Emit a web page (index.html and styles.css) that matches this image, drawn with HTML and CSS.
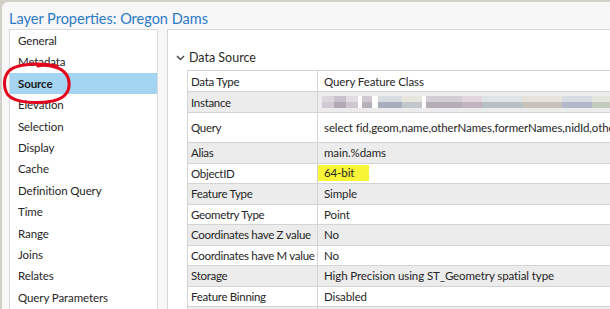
FILE: index.html
```html
<!DOCTYPE html>
<html lang="en">
<head>
    <meta charset="UTF-8">
    <meta name="viewport" content="width=device-width, initial-scale=1.0">
    <title>Layer Properties</title>
    <link rel="stylesheet" href="styles.css">
</head>
<body>
    <div class="dialog">
        <div class="title">Layer Properties: Oregon Dams</div>
        <div class="content">
            <div class="side-list">
                <div class="side-item">General</div>
                <div class="side-item">Metadata</div>
                <div class="side-item selected">Source</div>
                <div class="side-item">Elevation</div>
                <div class="side-item">Selection</div>
                <div class="side-item">Display</div>
                <div class="side-item">Cache</div>
                <div class="side-item">Definition Query</div>
                <div class="side-item">Time</div>
                <div class="side-item">Range</div>
                <div class="side-item">Joins</div>
                <div class="side-item">Relates</div>
                <div class="side-item">Query Parameters</div>
                <svg class="red-ring" width="80" height="44" viewBox="0 0 80 44">
                    <path d="M56 4 C40 1 18 1 9 8 C2 14 2 26 7 33 C14 41 36 42 52 39 C64 36 69 30 68 20 C67 11 60 6 50 4 C44 3 40 3 37 4"
                          fill="none" stroke="#e2061c" stroke-width="3" stroke-linecap="round"/>
                </svg>
            </div>
            <div class="main-panel">
                <div class="section-head">
                    <svg class="chevron" width="9" height="6" viewBox="0 0 9 6">
                        <path d="M1 1 L4.5 4.5 L8 1" fill="none" stroke="#444" stroke-width="1.4"/>
                    </svg>
                    <span>Data Source</span>
                </div>
                <table class="props">
                    <tr class="row-21"><td class="key">Data Type</td><td>Query Feature Class</td></tr>
                    <tr class="row-21 alt"><td class="key">Instance</td><td><div class="blurred"></div></td></tr>
                    <tr class="row-tall"><td class="key">Query</td><td>select fid,geom,name,otherNames,formerNames,nidId,otherStructureId,stateFedId</td></tr>
                    <tr class="alt"><td class="key">Alias</td><td>main.%dams</td></tr>
                    <tr><td class="key">ObjectID</td><td><span class="marker">64-bit</span></td></tr>
                    <tr class="alt"><td class="key">Feature Type</td><td>Simple</td></tr>
                    <tr><td class="key">Geometry Type</td><td>Point</td></tr>
                    <tr class="alt"><td class="key">Coordinates have Z value</td><td>No</td></tr>
                    <tr><td class="key">Coordinates have M value</td><td>No</td></tr>
                    <tr class="alt"><td class="key">Storage</td><td>High Precision using ST_Geometry spatial type</td></tr>
                    <tr><td class="key">Feature Binning</td><td>Disabled</td></tr>
                    <tr class="alt"><td class="key">&nbsp;</td><td>&nbsp;</td></tr>
                </table>
            </div>
        </div>
    </div>
</body>
</html>
```

FILE: styles.css
```css
body, html {
    margin: 0;
    padding: 0;
    height: 100%;
    overflow: hidden;
}
body {
    background: #d3cfca;
    font-family: 'Lato', 'Noto Sans', sans-serif;
    color: #262626;
}
.dialog {
    margin: 2px 0 0 2px;
    height: 100%;
    background: #f7f7f7;
    border-radius: 6px 0 0 0;
    display: flex;
    flex-direction: column;
}
.title {
    height: 27px;
    padding-left: 7px;
    font-size: 14.5px;
    line-height: 34px;
    color: #2b7ac6;
}
.content {
    display: flex;
    gap: 9px;
    padding-left: 7px;
    flex: 1;
    min-height: 0;
}
.side-list {
    position: relative;
    width: 147px;
    background: white;
    border: 1px solid #dadada;
    border-bottom: none;
}
.side-item {
    height: 21.4px;
    line-height: 21.4px;
    padding-left: 8px;
    font-size: 11.5px;
    letter-spacing: -0.1px;
    white-space: nowrap;
}
.side-item.selected {
    background: #a3d4f2;
    font-weight: bold;
    color: #1b1b1b;
}
.red-ring {
    position: absolute;
    left: -9px;
    top: 32px;
}
.main-panel {
    flex: 1;
    background: white;
    border-top: 1px solid #d6d6d6;
    border-left: 1px solid #d6d6d6;
    overflow: hidden;
    padding: 15px 0 0 8px;
}
.section-head {
    display: flex;
    align-items: center;
    gap: 4px;
    height: 24px;
    font-size: 12.5px;
    color: #2a2a2a;
}
.chevron {
    margin-top: 1px;
}
.props {
    margin: 1px 0 0 11px;
    border-collapse: collapse;
    font-size: 11.5px;
    letter-spacing: -0.1px;
    width: 480px;
    table-layout: fixed;
}
.props td {
    border: 1px solid #d4d4d4;
    height: 20.5px;
    padding: 0 6px;
    white-space: nowrap;
    overflow: hidden;
    box-sizing: border-box;
}
.props .key {
    width: 130px;
    padding-left: 3px;
    padding-right: 0;
    letter-spacing: -0.3px;
}
.props .row-21 td {
    height: 21px;
}
.props .row-tall td {
    height: 30px;
}
.props .alt td {
    background: #ececec;
}
.marker {
    display: inline-block;
    margin-left: -6px;
    padding: 0 15px 0 6px;
    height: 16px;
    line-height: 16px;
    background: #f7f536;
}
.blurred {
    width: 300px;
    height: 12px;
    margin-left: -2px;
    background:
        linear-gradient(90deg, #dcd7dd 0 12px, #c9c2cc 12px 24px, #e2dde2 24px 36px, #fff 36px 40px, #cfcad0 40px 50px, #fff 50px 56px, #d8dbe0 56px 80px, #e6e6df 80px 100px, #fff 100px 104px, #d2cfd6 104px 140px, #e1d6dc 140px 160px, #dfe4e6 160px 200px, #e6e3dc 200px 240px, #dadce4 240px 270px, #e3e6dc 270px 300px) top / 100% 6px no-repeat,
        linear-gradient(90deg, #d0cbd2 0 12px, #b3aab8 12px 24px, #cdc8cf 24px 36px, #fff 36px 40px, #b6b0ba 40px 50px, #fff 50px 56px, #a8aebc 56px 80px, #c4c7c9 80px 100px, #fff 100px 104px, #b2adb8 104px 140px, #c3b5be 140px 160px, #b8c0c6 160px 200px, #c7c3bb 200px 240px, #b3b7c7 240px 270px, #c6ccbd 270px 300px) bottom / 100% 6px no-repeat;
}
```
